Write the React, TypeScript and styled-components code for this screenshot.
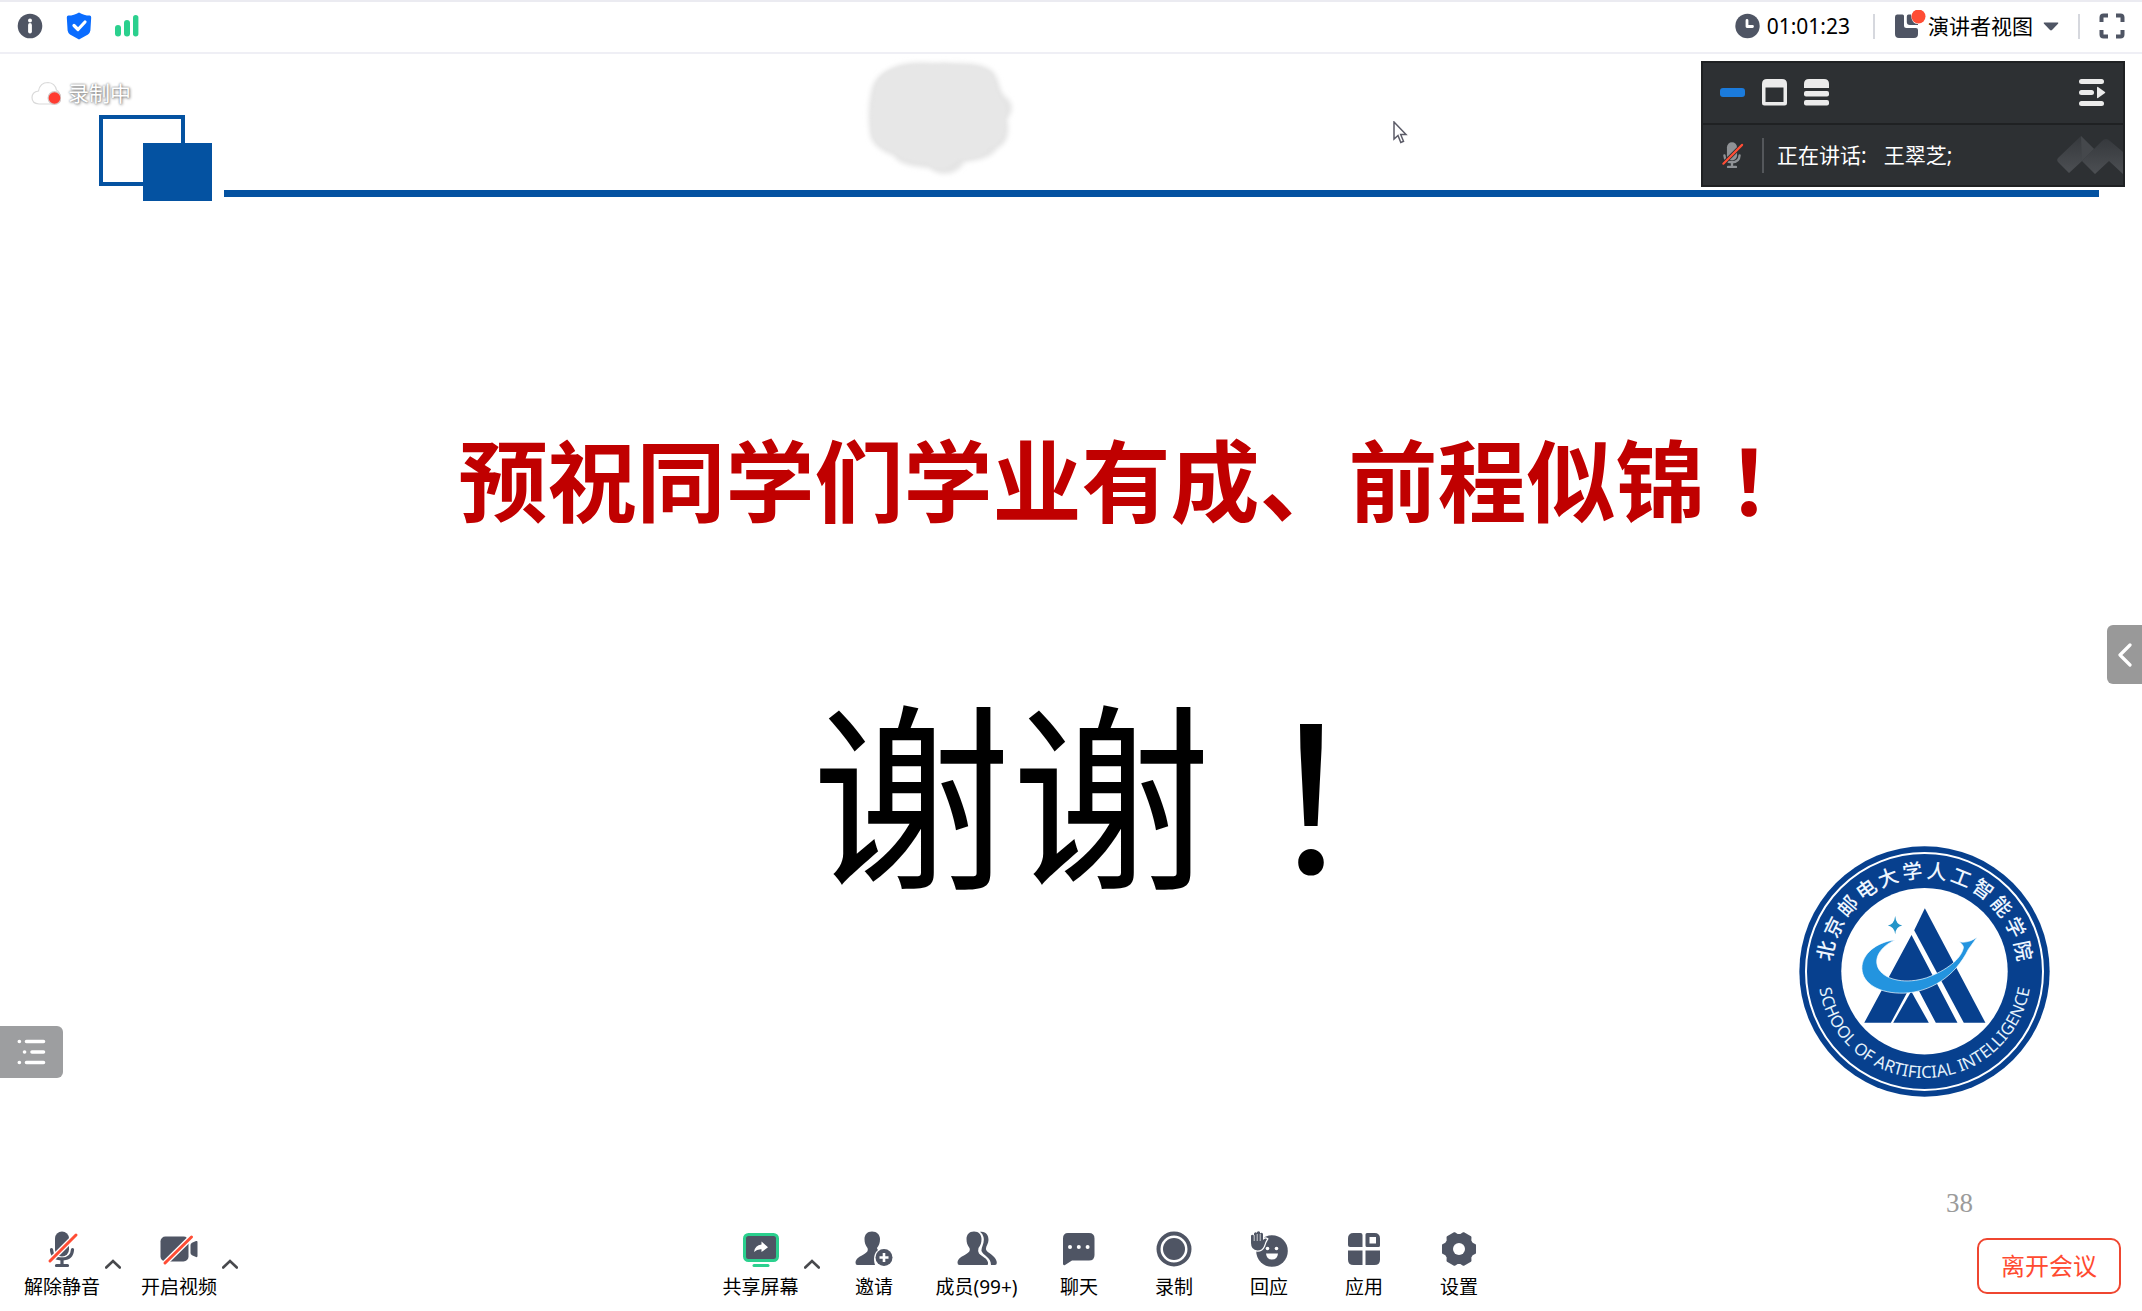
import React from "react";
import styled, { createGlobalStyle } from "styled-components";

const ink = "#4f5564";
const red = "#ff4d35";
const green = "#2bd08e";
const navy = "#0452a1";
const sans = '"Noto Sans", "Noto Sans CJK SC", sans-serif';

const GlobalStyle = createGlobalStyle`
  *, *::before, *::after { box-sizing: border-box; }
  body { margin: 0; background: #fff; color: #000; font-family: ${sans}; }
  button, select { margin: 0; padding: 0; border: 0; background: none; font: inherit; color: inherit; cursor: pointer; }
  svg { display: block; flex: none; }
`;

const Page = styled.div`
  display: flex;
  flex-direction: column;
  min-height: 100vh;
`;

/* ---------- top bar ---------- */

const TopBar = styled.header`
  display: flex;
  align-items: center;
  justify-content: space-between;
  height: 54px;
  padding: 0 17px 2px;
  border-top: 2px solid #ebebf1;
  border-bottom: 2px solid #efeff5;
`;

const StatusGroup = styled.div`
  display: flex;
  align-items: center;
  gap: 23px;
`;

const ViewGroup = styled.div`
  display: flex;
  align-items: center;
  gap: 19px;
  font-size: 21px;
  line-height: 28px;
`;

const Timer = styled.div`
  display: flex;
  align-items: center;
  gap: 7px;
  margin-right: 4px;
`;

const BarDivider = styled.span`
  width: 2px;
  height: 25px;
  background: #d6d8de;
`;

const ViewPicker = styled.label`
  display: flex;
  align-items: center;
  gap: 2px;
`;

const ViewSelect = styled.select`
  appearance: none;
  margin-right: 8px;
`;

const IconButton = styled.button`
  display: flex;
  align-items: center;
  justify-content: center;
`;

/* ---------- shared slide ---------- */

const Stage = styled.main`
  position: relative;
  flex: 1;
`;

const SlideHeader = styled.div`
  display: flex;
  align-items: flex-end;
  gap: 12px;
  padding: 61px 43px 0 99px;
`;

const HeaderRule = styled.div`
  flex: 1;
  height: 7px;
  margin-bottom: 4px;
  background: ${navy};
`;

const SlideTitle = styled.h1`
  margin: 210px 0 0;
  padding-left: 110px;
  text-align: center;
  font-family: "Noto Sans CJK SC", sans-serif;
  font-size: 89px;
  line-height: 132px;
  font-weight: 700;
  color: #c00000;
`;

const FullMark = styled.span`
  font-family: "Noto Sans CJK TC", sans-serif;
  line-height: 1;
`;

const Closing = styled.div`
  display: grid;
  margin-top: 112px;
`;

const Thanks = styled.p`
  grid-area: 1 / 1;
  margin: 0;
  padding-left: 80px;
  text-align: center;
  font-family: "Noto Sans CJK SC", sans-serif;
  font-size: 200px;
  line-height: 264px;
`;

const EmblemSlot = styled.div`
  grid-area: 1 / 1;
  align-self: end;
  justify-self: end;
  padding: 191px 92px 0 0;
`;

const PageNumber = styled.div`
  padding: 90px 169px 0 0;
  text-align: right;
  font-family: "Liberation Serif", serif;
  font-size: 27px;
  line-height: 32px;
  color: #9b9b9b;
`;

/* ---------- layers over the slide ---------- */

const Recording = styled.div`
  position: absolute;
  top: 25px;
  left: 31px;
  display: flex;
  align-items: center;
  gap: 7px;
  font-size: 21px;
  line-height: 28px;
  color: #fff;
  text-shadow: 0 0 2px #777, 1px 1px 3px #888;
`;

const CloudMark = styled.div`
  position: absolute;
  top: -4px;
  left: calc(50% - 211px);
`;

const Pointer = styled.div`
  position: absolute;
  top: 67px;
  left: calc(50% + 322px);
`;

const SpeakerPanel = styled.section`
  position: absolute;
  top: 7px;
  right: 17px;
  width: 424px;
  border: 2px solid #1f2123;
  background: #2d3033;
  color: #fff;
`;

const PanelTools = styled.div`
  display: flex;
  align-items: center;
  gap: 17px;
  height: 62px;
  padding: 0 17px 2px;
  border-bottom: 2px solid #1f2123;
`;

const DockButton = styled(IconButton)`
  margin-left: auto;
`;

const PanelSpeaker = styled.div`
  display: flex;
  align-items: center;
  height: 60px;
  padding-left: 16px;
  font-size: 21px;
  line-height: 28px;
`;

const PanelDivider = styled.span`
  width: 2px;
  height: 35px;
  margin: 0 13px 0 17px;
  background: #54575b;
`;

const SpeakerName = styled.span`
  margin-left: 17px;
`;

const Watermark = styled.div`
  margin-left: auto;
`;

const EdgeTab = styled.button<{ $side: "left" | "right" }>`
  position: absolute;
  display: flex;
  align-items: center;
  justify-content: center;
  ${(p) =>
    p.$side === "left"
      ? "left: 0; bottom: 141px; width: 63px; height: 52px; border-radius: 0 6px 6px 0; background: #9d9ea0;"
      : "right: 0; top: 571px; width: 35px; height: 59px; border-radius: 6px 0 0 6px; background: #999;"}
`;

/* ---------- bottom toolbar ---------- */

const Toolbar = styled.nav`
  display: flex;
  align-items: center;
  justify-content: space-between;
  padding: 12px 21px 10px 10px;
`;

const ToolGroup = styled.div`
  display: flex;
`;

const Tool = styled.button`
  display: flex;
  flex-direction: column;
  align-items: center;
  gap: 6px;
  min-width: 95px;
  padding: 0 14px;
  font-size: 19px;
  line-height: 28px;
  white-space: nowrap;
`;

const ToolPair = styled.div<{ $end: number }>`
  display: flex;
  margin-right: ${(p) => p.$end}px;
`;

const MoreButton = styled.button`
  display: flex;
  align-items: center;
  width: 16px;
  height: 36px;
  margin: 15px 0 0 -9px;
`;

const LeaveButton = styled.button`
  padding: 0 22px;
  border: 2px solid #ef4630;
  border-radius: 10px;
  font-size: 24px;
  line-height: 52px;
  color: #ff4a30;
`;

/* ---------- drawings ---------- */

const Emblem = () => {
  const cn = Array.from("北京邮电大学人工智能学院");
  return (
    <svg width="251" height="251" viewBox="57 46 754 754" role="img" aria-label="北京邮电大学人工智能学院">
      <circle cx="434" cy="423" r="376" fill="#07408e" />
      <circle cx="434" cy="423" r="356" fill="none" stroke="#fff" strokeWidth="6" />
      <circle cx="434" cy="422" r="250" fill="#fff" />
      <defs>
        <path id="emblem-arc" d="M114 423A320 320 0 0 0 754 423" />
      </defs>
      {cn.map((c, i) => (
        <text
          key={i}
          x="434"
          y="142"
          textAnchor="middle"
          transform={`rotate(${-78 + i * 14.2} 434 423)`}
          fill="#eef6ff"
          fontSize="60"
          fontWeight="500"
          fontFamily='"Noto Sans CJK SC", sans-serif'
        >
          {c}
        </text>
      ))}
      <text fill="#e4f2fb" fontSize="50" fontFamily='"Noto Sans", sans-serif' textAnchor="middle">
        <textPath href="#emblem-arc" startOffset="50%">
          SCHOOL OF ARTIFICIAL INTELLIGENCE
        </textPath>
      </text>
      <g fill="#07408e">
        <path d="M435 233L617 577H552L403 299Z" />
        <path d="M395 313L533 577H468L401 450L333 577H253Z" />
        <path d="M394 482L447 577H340Z" />
      </g>
      <path
        d="M345 328C290 335 245 370 246 414C247 460 300 490 372 488C450 485 525 440 566 356L592 320C574 332 558 337 539 334C546 341 551 345 551 351C545 385 500 420 440 442C380 461 320 450 298 418C278 385 300 350 345 328Z"
        fill="#2394df"
        stroke="#fff"
        strokeWidth="2"
      />
      <path d="M346 256Q348 281 367 285Q348 288 346 311Q343 288 324 285Q343 281 346 256Z" fill="#2394c8" />
    </svg>
  );
};

const SlideMark = () => (
  <svg width="113" height="86" viewBox="0 0 113 86" aria-hidden="true">
    <rect x="2" y="2" width="82" height="67" fill="#fff" stroke={navy} strokeWidth="4" />
    <rect x="44" y="28" width="69" height="58" fill={navy} />
  </svg>
);

const Cloud = () => (
  <svg width="160" height="135" viewBox="0 0 160 130" preserveAspectRatio="none" aria-hidden="true">
    <defs>
      <filter id="cloud-soft" x="-10%" y="-10%" width="120%" height="120%">
        <feGaussianBlur stdDeviation="2.5" />
      </filter>
      <filter id="cloud-edge" x="-10%" y="-10%" width="120%" height="120%">
        <feGaussianBlur stdDeviation="1.5" />
      </filter>
    </defs>
    <path
      d="M30 18C50 8 72 14 84 12C100 14 118 10 132 20C140 28 138 36 144 44C154 50 154 60 147 66C150 78 148 90 138 94C130 106 116 106 104 108C100 118 82 124 70 114C58 112 40 112 34 102C22 98 10 90 10 80C8 66 8 52 12 36C16 26 22 22 30 18Z"
      fill="#e4e4e4"
      filter="url(#cloud-soft)"
    />
    <path
      d="M30 20C50 12 72 16 84 14C100 16 118 14 130 22C136 30 134 38 140 46C148 54 146 62 144 68C146 80 140 90 130 94C122 104 108 106 98 105C90 115 76 117 68 109C56 107 42 107 34 98C22 95 14 87 12 79C12 62 12 50 16 36C18 28 22 24 30 20Z"
      fill="#e7e7e7"
      filter="url(#cloud-edge)"
    />
  </svg>
);

const InfoIcon = () => (
  <svg width="26" height="26" viewBox="0 0 26 26" aria-hidden="true">
    <circle cx="13" cy="13" r="12.3" fill={ink} />
    <circle cx="13" cy="7.6" r="2" fill="#fff" />
    <path d="M13 12v6.5" stroke="#fff" strokeWidth="3.8" strokeLinecap="round" />
  </svg>
);

const ShieldIcon = () => (
  <svg width="26" height="28" viewBox="0 0 26 28" aria-hidden="true">
    <path d="M13 .5C16 2.5 20 3.6 23.6 3.6Q25.2 3.8 25.2 5.5L24.4 18.5Q24 21 22 22.4L13 27.5L4 22.4Q2 21 1.6 18.5L.8 5.5Q.8 3.8 2.4 3.6C6 3.6 10 2.5 13 .5Z" fill="#0a6cff" />
    <path d="M8 13.5l4 4 7-7.5" fill="none" stroke="#fff" strokeWidth="3.2" strokeLinecap="round" strokeLinejoin="round" />
  </svg>
);

const SignalIcon = () => (
  <svg width="24" height="22" viewBox="0 0 24 22" aria-hidden="true">
    <g fill={green}>
      <rect x="0" y="10" width="6" height="11.5" rx="3" />
      <rect x="9" y="5" width="6" height="16.5" rx="3" />
      <rect x="18" y="0" width="5.4" height="21.5" rx="2.7" />
    </g>
  </svg>
);

const ClockIcon = () => (
  <svg width="25" height="26" viewBox="0 0 25 26" aria-hidden="true">
    <circle cx="12.5" cy="13" r="12.2" fill={ink} />
    <path d="M12 7.5v6h5.5" fill="none" stroke="#fff" strokeWidth="2.8" strokeLinejoin="round" strokeLinecap="round" />
  </svg>
);

const SpeakerViewIcon = () => (
  <svg width="32" height="32" viewBox="0 0 32 32" aria-hidden="true">
    <path d="M3 4.500H8.500Q10 4.500 10 6V15.500Q10 18 12.500 18H22Q24 18 24 20V24Q24 28 20 28H5Q1 28 1 24V7Q1 4.500 3 4.500Z" fill={ink} />
    <path d="M14.500 4.500H17Q17.500 14 24 14V15H16Q12.800 15 12.800 12V6.500Q12.800 4.500 14.500 4.500Z" fill={ink} />
    <circle cx="24.500" cy="6.500" r="7" fill={red} />
  </svg>
);

const CaretIcon = () => (
  <svg width="16" height="9" viewBox="0 0 16 9" aria-hidden="true">
    <path d="M1 .5H15Q15.800 .8 15 1.800L9 8Q8 8.800 7 8L1 1.800Q.2 .8 1 .5Z" fill={ink} />
  </svg>
);

const FullscreenIcon = () => (
  <svg width="26" height="26" viewBox="0 0 26 26" aria-hidden="true">
    <path d="M2.500 9V4.500Q2.500 2.500 4.500 2.500H9M17 2.500h4.500Q23.500 2.500 23.500 4.500V9M23.500 17v4.500Q23.500 23.500 21.500 23.500H17M9 23.500H4.500Q2.500 23.500 2.500 21.500V17" fill="none" stroke={ink} strokeWidth="4" />
  </svg>
);

const MinimizeIcon = () => (
  <svg width="25" height="28" viewBox="0 0 25 28" aria-hidden="true">
    <rect y="10" width="25" height="9" rx="3" fill="#1b7bdc" />
  </svg>
);

const WindowIcon = () => (
  <svg width="25" height="28" viewBox="0 0 25 28" aria-hidden="true">
    <path fillRule="evenodd" d="M5 1H20Q25 1 25 6V25Q25 27.500 22.500 27.500H2.500Q0 27.500 0 25V6Q0 1 5 1ZM3.500 9.500V24H21.500V9.500Z" fill="#ebebeb" />
  </svg>
);

const StackIcon = () => (
  <svg width="25" height="28" viewBox="0 0 25 28" aria-hidden="true">
    <g fill="#ebebeb">
      <path d="M5 1H20Q25 1 25 6V10H0V6Q0 1 5 1Z" />
      <rect y="13" width="25" height="5.500" rx="2" />
      <rect y="22" width="25" height="5.500" rx="2" />
    </g>
  </svg>
);

const DockIcon = () => (
  <svg width="27" height="28" viewBox="0 0 27 28" aria-hidden="true">
    <g fill="#ebebeb">
      <rect y="1" width="25" height="5" rx="2.500" />
      <rect y="12" width="15" height="5" rx="2.500" />
      <rect y="23" width="25" height="5" rx="2.500" />
      <path d="M18 9.500Q18 8.500 19 9L26 14Q26.500 14.500 26 15L19 20Q18 20.500 18 19.500Z" />
    </g>
  </svg>
);

const MicOffIcon = ({ size, color, gap }: { size: number; color: string; gap: string }) => (
  <svg width={size} height={size} viewBox="0 0 36 36" aria-hidden="true">
    <rect x="11" y="0.500" width="14" height="25" rx="7" fill={color} />
    <path d="M7.500 18.500Q8 28 18 28Q28 28 28.500 18.500" fill="none" stroke={color} strokeWidth="3.200" strokeLinecap="round" />
    <path d="M18 28v6M12.500 34.500h11" stroke={color} strokeWidth="3.200" strokeLinecap="round" />
    <path d="M6 30L32 4" stroke={gap} strokeWidth="5.500" strokeLinecap="round" />
    <path d="M6 30L32 4" stroke={red} strokeWidth="3" strokeLinecap="round" />
  </svg>
);

const CameraOffIcon = () => (
  <svg width="38" height="36" viewBox="0 0 38 36" aria-hidden="true">
    <rect x="0.500" y="5.500" width="28" height="25" rx="5" fill={ink} />
    <path d="M30.500 14Q30.500 12.500 32 11.800L36 10Q37.500 9.500 37.500 11V25Q37.500 26.500 36 26L32 24.200Q30.500 23.500 30.500 22Z" fill={ink} />
    <path d="M5 32L31.500 6" stroke="#fff" strokeWidth="5.500" strokeLinecap="round" />
    <path d="M5 32L31.500 6" stroke={red} strokeWidth="3" strokeLinecap="round" />
  </svg>
);

const ChevronUp = () => (
  <svg width="16" height="10" viewBox="0 0 16 10" aria-hidden="true">
    <path d="M1.200 8.500L8 2L14.800 8.500" fill="none" stroke="#48494d" strokeWidth="2.600" strokeLinecap="round" />
  </svg>
);

const ShareIcon = () => (
  <svg width="36" height="36" viewBox="0 0 36 36" aria-hidden="true">
    <rect x="1.500" y="3.500" width="33" height="26" rx="4" fill={ink} stroke={green} strokeWidth="3" />
    <rect x="9.500" y="33" width="17" height="3" rx="1.500" fill={green} />
    <path d="M18.500 10.500L25 16.200L18.500 21V18.300Q14 18 11 21Q12 14 18.500 13.500Z" fill="#fff" />
  </svg>
);

const body = "M17 .5C12 .5 9.500 4 9.500 8C9.500 12 10.500 14.500 12.500 17C13.500 20 12 21.500 8.500 23.500C4 26 1 27.500 .5 31.500Q.4 34 2.500 34H";

const InviteIcon = () => (
  <svg width="38" height="36" viewBox="0 0 38 36" aria-hidden="true">
    <path d={`${body}20C18 28 19 22 23 19Q22 18 22 17C24 14.500 25 12 25 8C25 4 22 .5 17 .5Z`} fill={ink} />
    <circle cx="29" cy="26.500" r="8.500" fill={ink} />
    <path d="M29 22v9M24.500 26.500h9" stroke="#fff" strokeWidth="2.600" />
  </svg>
);

const MembersIcon = () => (
  <svg width="40" height="36" viewBox="0 0 40 36" aria-hidden="true">
    <path d="M23 .8C29 0 31.500 4 31.500 9C31.500 13 28.500 15.500 29 18.500C30 22 38 24 39.500 30Q40.500 34 38 34H34C34 26 26 24.500 24.500 20C24 16 28 12 26.500 6Q25.500 2.500 23 .8Z" fill={ink} />
    <path d={`${body}30Q31.500 34 31 31.500C30 27 25.500 26 22 22.500Q20.500 20.500 21.500 17C23.500 14.500 24.500 12 24.500 8C24.500 4 22 .5 17 .5Z`} fill={ink} />
  </svg>
);

const ChatIcon = () => (
  <svg width="34" height="36" viewBox="0 0 34 36" aria-hidden="true">
    <path d="M6 2H27Q32.500 2 32.500 7.500V24Q32.500 29.500 27 29.500H10L3 34Q1 35 1 32.500V7.500Q1 2 6 2Z" fill={ink} />
    <g fill="#fff">
      <circle cx="8" cy="16" r="2" />
      <circle cx="16.800" cy="16" r="2" />
      <circle cx="25.600" cy="16" r="2" />
    </g>
  </svg>
);

const RecordIcon = () => (
  <svg width="36" height="36" viewBox="0 0 36 36" aria-hidden="true">
    <circle cx="18" cy="18" r="15.500" fill="none" stroke={ink} strokeWidth="4" />
    <circle cx="18" cy="18" r="11" fill={ink} />
  </svg>
);

const ReactIcon = () => (
  <svg width="38" height="36" viewBox="0 0 38 36" aria-hidden="true">
    <circle cx="22" cy="20" r="15.800" fill={ink} />
    <path
      d="M1 4.500Q2.500 3 4 4.500V2.500Q5.500 .5 7 2V1Q8.500 -.5 10 1V2.500Q12 1 13 3V9Q15 6.500 17 8Q15 11 14 15Q12 19.500 7.500 19.500Q1 19 1 12Z"
      fill={ink}
      stroke="#fff"
      strokeWidth="2.500"
      paintOrder="stroke"
    />
    <path d="M4.200 4v6M7.200 3v7M10.200 3v7" stroke="#fff" strokeWidth="0.700" />
    <g fill="#fff">
      <circle cx="17.500" cy="17.500" r="1.800" />
      <circle cx="26.500" cy="17.500" r="1.800" />
      <path d="M16 22.500H28Q27.500 28.500 22 28.500Q16.500 28.500 16 22.500Z" />
    </g>
  </svg>
);

const AppsIcon = () => (
  <svg width="34" height="36" viewBox="0 0 34 36" aria-hidden="true">
    <g fill={ink}>
      <path d="M6.500 2H13.500Q15.500 2 15.500 4V16H3Q1 16 1 14V7.500Q1 2 6.500 2Z" />
      <path d="M1 19.500H15.500V34H6.500Q1 34 1 28.500Z" />
      <path d="M18.500 19.500H33V28.500Q33 34 27.500 34H18.500Z" />
      <path fillRule="evenodd" d="M20 2H27.500Q33 2 33 7.500V14.500Q33 16 31.500 16H20Q18.500 16 18.500 14.500V3.500Q18.500 2 20 2ZM22.500 6V12.500H29V6Z" />
    </g>
  </svg>
);

const gearPoints = Array.from({ length: 6 }, (_, t) =>
  [
    [-24, 14],
    [-14, 16.5],
    [14, 16.5],
    [24, 14],
  ].map(([a, r]) => {
    const rad = ((t * 60 + a) * Math.PI) / 180;
    return `${(18 + r * Math.cos(rad)).toFixed(2)},${(18 + r * Math.sin(rad)).toFixed(2)}`;
  })
)
  .flat()
  .join(" ");

const GearIcon = () => (
  <svg width="36" height="36" viewBox="0 0 36 36" aria-hidden="true">
    <polygon points={gearPoints} fill={ink} stroke={ink} strokeWidth="2" strokeLinejoin="round" />
    <circle cx="18" cy="18" r="6" fill="#fff" />
  </svg>
);

const CloudRecIcon = () => (
  <svg width="30" height="26" viewBox="0 0 30 26" aria-hidden="true">
    <path d="M8 24Q1 23.500 1 17.500Q1 12 7.500 11Q9 2.500 17 2.500Q24 3 25.500 10Q29 12 29 17Q28.500 24 22 24Z" fill="#fff" stroke="#dadada" strokeWidth="1.200" />
    <circle cx="23.500" cy="18" r="7" fill="#d6c8c7" />
    <circle cx="23.500" cy="18" r="5.800" fill="#ff3b30" />
  </svg>
);

const PointerIcon = () => (
  <svg width="16" height="24" viewBox="0 0 16 24" aria-hidden="true">
    <path d="M1 1V18L5 14.500L7.800 21.500L10.500 20.300L7.700 13.500H13Z" fill="#fff" stroke="#5c5c68" strokeWidth="1.500" />
  </svg>
);

const WatermarkIcon = () => (
  <svg width="67" height="42" viewBox="0 0 67 42" aria-hidden="true">
    <defs>
      <linearGradient id="wm" x1="0" y1="0" x2="0" y2="1">
        <stop offset="0" stopColor="#36393d" />
        <stop offset="1" stopColor="#4c4f53" />
      </linearGradient>
    </defs>
    <path d="M2 24L25 2L38 15L26 27L13 39L3 29Q0 26.500 2 24Z" fill="url(#wm)" />
    <path d="M25 2L38 15L26 27Z" fill="#45484c" />
    <path d="M26 27L46 7Q50 3 54 7L67 18V40L53 27L39 40Z" fill="url(#wm)" />
  </svg>
);

const OutlineIcon = () => (
  <svg width="29" height="28" viewBox="0 0 29 28" aria-hidden="true">
    <g stroke="#fff" strokeWidth="3.600" strokeLinecap="round">
      <path d="M9.500 3.500H26.500M15 14H26.500M9.500 24.500H26.500" />
      <path d="M2.300 3.500h.1M7.500 14h.1M2.300 24.500h.1" />
    </g>
  </svg>
);

const ChevronLeft = () => (
  <svg width="15" height="26" viewBox="0 0 15 26" aria-hidden="true">
    <path d="M13 3L3 13L13 23" fill="none" stroke="#fff" strokeWidth="3.200" strokeLinecap="round" strokeLinejoin="round" />
  </svg>
);

const tools = [
  { label: "邀请", icon: <InviteIcon /> },
  { label: "成员(99+)", icon: <MembersIcon /> },
  { label: "聊天", icon: <ChatIcon /> },
  { label: "录制", icon: <RecordIcon /> },
  { label: "回应", icon: <ReactIcon /> },
  { label: "应用", icon: <AppsIcon /> },
  { label: "设置", icon: <GearIcon /> },
];

const ToolWithMore = ({ label, icon, end }: { label: string; icon: React.ReactNode; end: number }) => (
  <ToolPair $end={end}>
    <Tool>
      {icon}
      {label}
    </Tool>
    <MoreButton aria-label={`${label}选项`}>
      <ChevronUp />
    </MoreButton>
  </ToolPair>
);

export default function App() {
  return (
    <Page>
      <GlobalStyle />
      <TopBar>
        <StatusGroup>
          <IconButton aria-label="会议信息"><InfoIcon /></IconButton>
          <IconButton aria-label="安全"><ShieldIcon /></IconButton>
          <IconButton aria-label="网络"><SignalIcon /></IconButton>
        </StatusGroup>
        <ViewGroup>
          <Timer>
            <ClockIcon />
            01:01:23
          </Timer>
          <BarDivider />
          <ViewPicker>
            <SpeakerViewIcon />
            <ViewSelect aria-label="视图">
              <option>演讲者视图</option>
            </ViewSelect>
            <CaretIcon />
          </ViewPicker>
          <BarDivider />
          <IconButton aria-label="全屏"><FullscreenIcon /></IconButton>
        </ViewGroup>
      </TopBar>

      <Stage>
        <SlideHeader>
          <SlideMark />
          <HeaderRule />
        </SlideHeader>
        <SlideTitle>
          预祝同学们学业有成、前程似锦<FullMark>！</FullMark>
        </SlideTitle>
        <Closing>
          <Thanks>
            谢谢<FullMark>！</FullMark>
          </Thanks>
          <EmblemSlot>
            <Emblem />
          </EmblemSlot>
        </Closing>
        <PageNumber>38</PageNumber>

        <CloudMark><Cloud /></CloudMark>
        <Recording>
          <CloudRecIcon />
          录制中
        </Recording>
        <Pointer><PointerIcon /></Pointer>
        <SpeakerPanel>
          <PanelTools>
            <IconButton aria-label="最小化"><MinimizeIcon /></IconButton>
            <IconButton aria-label="单画面"><WindowIcon /></IconButton>
            <IconButton aria-label="多画面"><StackIcon /></IconButton>
            <DockButton aria-label="停靠到侧边"><DockIcon /></DockButton>
          </PanelTools>
          <PanelSpeaker>
            <MicOffIcon size={26} color="#8f9296" gap="#2d3033" />
            <PanelDivider />
            正在讲话:
            <SpeakerName>王翠芝;</SpeakerName>
            <Watermark><WatermarkIcon /></Watermark>
          </PanelSpeaker>
        </SpeakerPanel>
        <EdgeTab $side="right" aria-label="展开侧栏"><ChevronLeft /></EdgeTab>
        <EdgeTab $side="left" aria-label="目录"><OutlineIcon /></EdgeTab>
      </Stage>

      <Toolbar>
        <ToolGroup>
          <ToolWithMore label="解除静音" icon={<MicOffIcon size={36} color={ink} gap="#fff" />} end={6} />
          <ToolWithMore label="开启视频" icon={<CameraOffIcon />} end={0} />
        </ToolGroup>
        <ToolGroup>
          <ToolWithMore label="共享屏幕" icon={<ShareIcon />} end={7} />
          {tools.map((t) => (
            <Tool key={t.label}>
              {t.icon}
              {t.label}
            </Tool>
          ))}
        </ToolGroup>
        <LeaveButton>离开会议</LeaveButton>
      </Toolbar>
    </Page>
  );
}
